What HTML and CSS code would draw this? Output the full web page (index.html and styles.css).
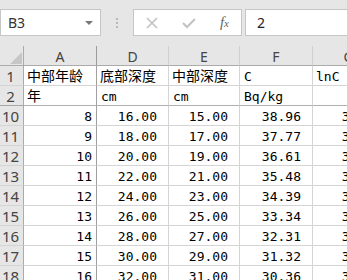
FILE: index.html
```html
<!DOCTYPE html>
<html lang="zh">
<head>
    <meta charset="UTF-8">
    <title>Sheet</title>
    <link rel="stylesheet" href="styles.css">
</head>
<body>

    <div class="toolbar">
        <div class="namebox">
            <span>B3</span>
            <svg class="namebox__arrow" width="8" height="4" viewBox="0 0 8 4"><path d="M0 0h8L4 4z" fill="#777"/></svg>
        </div>
        <div class="grip"><i></i><i></i><i></i></div>
        <div class="fbuttons">
            <svg width="12" height="12" viewBox="0 0 12 12"><path d="M1 1l10 10M11 1L1 11" stroke="#c2c2c2" stroke-width="1.6"/></svg>
            <svg width="14" height="12" viewBox="0 0 14 12"><path d="M1 6l4 4 8-8" stroke="#c2c2c2" stroke-width="2" fill="none"/></svg>
            <span class="fx">f<sub>x</sub></span>
        </div>
        <div class="formula">2</div>
    </div>

    <div class="sheet">
        <div class="hd corner"><svg width="12" height="12" viewBox="0 0 12 12"><path d="M12 0v12H0z" fill="#c6c6c6"/></svg></div>
        <div class="hd hd--hidden">A</div>
        <div class="hd">D</div>
        <div class="hd">E</div>
        <div class="hd">F</div>
        <div class="hd">G</div>

        <div class="rh">1</div>
        <div class="c c--cjk c--hidden">中部年龄</div>
        <div class="c c--cjk">底部深度</div>
        <div class="c c--cjk">中部深度</div>
        <div class="c">C</div>
        <div class="c c--g">lnC</div>

        <div class="rh rh--hidden">2</div>
        <div class="c c--cjk c--hidden r--hidden">年</div>
        <div class="c r--hidden">cm</div>
        <div class="c r--hidden">cm</div>
        <div class="c r--hidden">Bq/kg</div>
        <div class="c r--hidden"></div>

        <div class="rh">10</div>
        <div class="c n n--int c--hidden">8</div>
        <div class="c n">16.00</div>
        <div class="c n">15.00</div>
        <div class="c n">38.96</div>
        <div class="c n">3.66</div>

        <div class="rh">11</div>
        <div class="c n n--int c--hidden">9</div>
        <div class="c n">18.00</div>
        <div class="c n">17.00</div>
        <div class="c n">37.77</div>
        <div class="c n">3.63</div>

        <div class="rh">12</div>
        <div class="c n n--int c--hidden">10</div>
        <div class="c n">20.00</div>
        <div class="c n">19.00</div>
        <div class="c n">36.61</div>
        <div class="c n">3.60</div>

        <div class="rh">13</div>
        <div class="c n n--int c--hidden">11</div>
        <div class="c n">22.00</div>
        <div class="c n">21.00</div>
        <div class="c n">35.48</div>
        <div class="c n">3.57</div>

        <div class="rh">14</div>
        <div class="c n n--int c--hidden">12</div>
        <div class="c n">24.00</div>
        <div class="c n">23.00</div>
        <div class="c n">34.39</div>
        <div class="c n">3.54</div>

        <div class="rh">15</div>
        <div class="c n n--int c--hidden">13</div>
        <div class="c n">26.00</div>
        <div class="c n">25.00</div>
        <div class="c n">33.34</div>
        <div class="c n">3.51</div>

        <div class="rh">16</div>
        <div class="c n n--int c--hidden">14</div>
        <div class="c n">28.00</div>
        <div class="c n">27.00</div>
        <div class="c n">32.31</div>
        <div class="c n">3.48</div>

        <div class="rh">17</div>
        <div class="c n n--int c--hidden">15</div>
        <div class="c n">30.00</div>
        <div class="c n">29.00</div>
        <div class="c n">31.32</div>
        <div class="c n">3.44</div>

        <div class="rh">18</div>
        <div class="c n n--int c--hidden">16</div>
        <div class="c n">32.00</div>
        <div class="c n">31.00</div>
        <div class="c n">30.36</div>
        <div class="c n">3.41</div>
    </div>

</body>
</html>
```

FILE: styles.css
```css
html {
  box-sizing: border-box;
}

*,
*::before,
*::after {
  box-sizing: inherit;
}

body {
  margin: 0;
  background-color: #e6e6e6;
  font-family: "Noto Sans", "Liberation Sans", sans-serif;
  overflow: hidden;
}

/* formula bar */

.toolbar {
  display: flex;
  align-items: center;
  height: 46px;
  padding-bottom: 1px;
}

.namebox,
.fbuttons,
.formula {
  height: 27px;
  background-color: #fff;
  border: 1px solid #c6c6c6;
  display: flex;
  align-items: center;
}

.namebox {
  width: 101px;
  padding: 0 7px 0 7px;
  justify-content: space-between;
  font-size: 14px;
  color: #333;
}

.grip {
  width: 32px;
  display: flex;
  flex-direction: column;
  align-items: center;
  gap: 2px;
}

.grip i {
  display: block;
  width: 2px;
  height: 2px;
  background-color: #b8b8b8;
}

.fbuttons {
  width: 109px;
  padding: 0 12px 0 12px;
  justify-content: space-between;
  margin-right: 3px;
}

.fx {
  font-family: "Liberation Serif", serif;
  font-style: italic;
  font-size: 15px;
  color: #666;
  line-height: 1;
}

.fx sub {
  font-size: 11px;
  vertical-align: 0;
}

.formula {
  flex: 1;
  padding-left: 11px;
  font-size: 14px;
  color: #222;
  border-right: 0;
}

/* grid */

.sheet {
  display: grid;
  grid-template-columns: 24px 73px 72px 71px 73px 72px;
  grid-auto-rows: 20px;
  width: 385px;
}

.hd {
  border-right: 1px solid #d0d0d0;
  border-bottom: 1px solid #ababab;
  text-align: center;
  font-size: 14px;
  line-height: 22px;
  color: #444;
}

.corner {
  border-right-color: #ababab;
  display: flex;
  align-items: flex-end;
  justify-content: flex-end;
  padding: 0 1px 1px 0;
}

.hd--hidden {
  border-right-color: #9c9c9c;
}

.rh {
  border-right: 1px solid #ababab;
  border-bottom: 1px solid #d4d4d4;
  text-align: center;
  font-size: 15px;
  line-height: 20px;
  color: #444;
  padding-right: 2px;
}

.rh--hidden {
  border-bottom-color: #a8a8a8;
}

.c {
  background-color: #fff;
  border-right: 1px solid #d4d4d4;
  border-bottom: 1px solid #d4d4d4;
  font-family: "DejaVu Sans Mono", "Liberation Mono", monospace;
  font-size: 13px;
  line-height: 22px;
  padding-left: 4px;
  color: #000;
  white-space: nowrap;
  overflow: hidden;
}

.c--cjk {
  font-family: "Noto Sans CJK SC", sans-serif;
  font-size: 14px;
  line-height: 19px;
  padding-left: 3px;
}

.c--g {
  padding-left: 3px;
}

.c--hidden {
  border-right-color: #a0a0a0;
}

.r--hidden {
  border-bottom-color: #b0b0b0;
}

.n {
  text-align: right;
  padding-right: 11px;
}

.n--int {
  padding-right: 4px;
}
```
